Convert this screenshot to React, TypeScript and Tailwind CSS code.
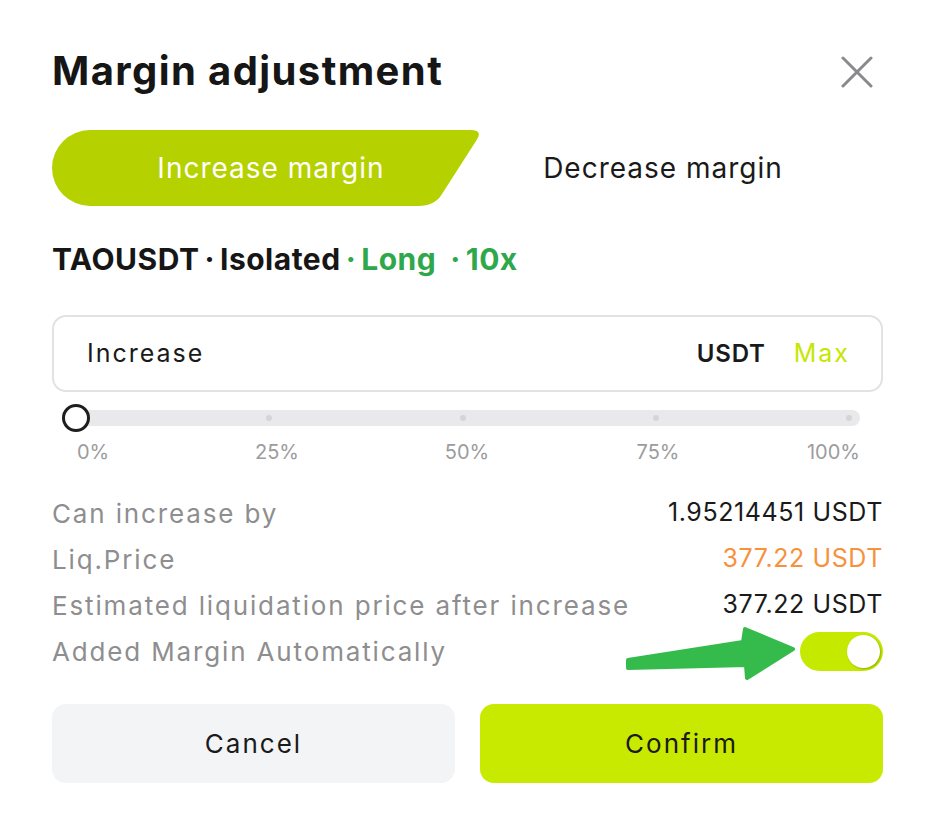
import React from "react";

const F = { fontFamily: "Inter, 'Noto Sans', sans-serif" } as React.CSSProperties;

function CloseIcon() {
  return (
    <svg width="32" height="32" viewBox="0 0 32 32" fill="none">
      <path d="M2 2 L30 30 M30 2 L2 30" stroke="#8a8a8c" strokeWidth="3" strokeLinecap="round" />
    </svg>
  );
}

function Row({ label, value, valueClass }: { label: string; value: React.ReactNode; valueClass?: string }) {
  return (
    <div className="flex h-[46px] items-center justify-between">
      <span className="text-[26px] tracking-[1.85px] text-[#8e8e90]">{label}</span>
      <span className={"text-[25px] tracking-[0.6px] " + (valueClass ?? "text-[#1a1a1a]")}>{value}</span>
    </div>
  );
}

export default function App() {
  const dots = [25, 50, 75, 100];
  return (
    <div className="w-[934px] h-[838px] overflow-hidden bg-white" style={F}>
      <div className="pl-[52px] pr-[51px] pt-[49px]">
        <div className="flex h-[44px] items-center justify-between">
          <h1 className="text-[40px] font-bold tracking-[1.4px] text-[#161616]">Margin adjustment</h1>
          <div className="mr-[10px] mt-[2px]">
            <CloseIcon />
          </div>
        </div>

        <div className="mt-[37px] flex h-[76px]">
          <button className="relative w-[428px] h-[76px] shrink-0 pl-[10px]">
            <svg className="absolute left-0 top-0" width="428" height="76" viewBox="0 0 428 76">
              <path d="M38,0 H418 Q432,0 424,11 L390,64 Q383,76 366,76 H38 A38,38 0 0 1 38,0 Z" fill="#b5d100" />
            </svg>
            <span className="relative text-[28px] tracking-[1px] text-white">Increase margin</span>
          </button>
          <button className="flex-1 -ml-[37px] h-[76px] text-[28px] tracking-[1px] text-[#1a1a1a]">Decrease margin</button>
        </div>

        <div className="mt-[35px] flex h-[36px] items-center text-[30px] font-bold tracking-[0.5px]">
          <span className="text-[#161616]">TAOUSDT</span>
          <span className="mx-[5px] text-[#161616]">·</span>
          <span className="text-[#161616]">Isolated</span>
          <span className="mx-[5px] text-[#2ea84b]">·</span>
          <span className="text-[#2ea84b]">Long</span>
          <span className="ml-[14px] mr-[5px] text-[#2ea84b]">·</span>
          <span className="text-[#2ea84b]">10x</span>
        </div>

        <div className="mt-[38px] flex h-[77px] items-center justify-between rounded-[14px] border-2 border-[#e2e2e4] pl-[33px] pr-[31px]">
          <span className="text-[25px] tracking-[2px] text-[#1a1a1a]">Increase</span>
          <div className="flex items-center gap-[28px]">
            <span className="text-[24px] font-semibold tracking-[0.8px] text-[#1a1a1a]">USDT</span>
            <span className="text-[25px] tracking-[2px] text-[#c6e600]">Max</span>
          </div>
        </div>

        <div className="relative mt-[12px] h-[28px] ml-[10px] mr-[23px]">
          <div className="absolute left-0 right-0 top-[6px] h-[16px] rounded-full bg-[#e9e9eb]" />
          {dots.map((d) => (
            <div
              key={d}
              className="absolute top-[11px] h-[6px] w-[6px] -translate-x-1/2 rounded-full bg-[#d5d5d8]"
              style={{ left: `${14 + ((787 - 14) * d) / 100}px` }}
            />
          ))}
          <div className="absolute left-0 top-0 h-[28px] w-[28px] rounded-full border-[3.5px] border-[#1e1e1e] bg-white" />
        </div>

        <div className="relative mt-[8px] h-[24px] text-[20px] leading-[24px] text-[#9c9c9e]">
          <span className="absolute left-[25px]">0%</span>
          <span className="absolute left-[225px] -translate-x-1/2">25%</span>
          <span className="absolute left-[415px] -translate-x-1/2">50%</span>
          <span className="absolute left-[606px] -translate-x-1/2">75%</span>
          <span className="absolute right-[23px]">100%</span>
        </div>

        <div className="mt-[26px] flex flex-col">
          <Row label="Can increase by" value="1.95214451 USDT" />
          <Row label="Liq.Price" value="377.22 USDT" valueClass="text-[#f7913c]" />
          <Row label="Estimated liquidation price after increase" value="377.22 USDT" />
          <div className="relative flex h-[47px] items-center justify-between">
            <span className="text-[26px] tracking-[1.85px] text-[#8e8e90]">Added Margin Automatically</span>
            <div className="relative h-[39px] w-[83px] rounded-full bg-[#c6e900]">
              <div className="absolute right-[3px] top-[3px] h-[33px] w-[33px] rounded-full bg-white shadow-[1px_1px_2px_rgba(0,0,0,0.25)]" />
            </div>
            <svg className="absolute left-[572px] top-[-6px]" width="175" height="60" viewBox="0 0 175 60">
              <path
                d="M4,38 L119,20 L121,7 L169,27 L123,56 L122,43 L4,46 Z"
                fill="#35bb4b"
                stroke="#35bb4b"
                strokeWidth="4"
                strokeLinejoin="round"
              />
            </svg>
          </div>
        </div>

        <div className="mt-[29px] flex h-[79px] gap-[25px]">
          <button className="flex-1 rounded-[14px] bg-[#f3f4f6] text-[26px] tracking-[2px] text-[#1a1a1a]">Cancel</button>
          <button className="flex-1 rounded-[14px] bg-[#c8ea00] text-[26px] tracking-[2px] text-[#1a1a1a]">Confirm</button>
        </div>
      </div>
    </div>
  );
}
